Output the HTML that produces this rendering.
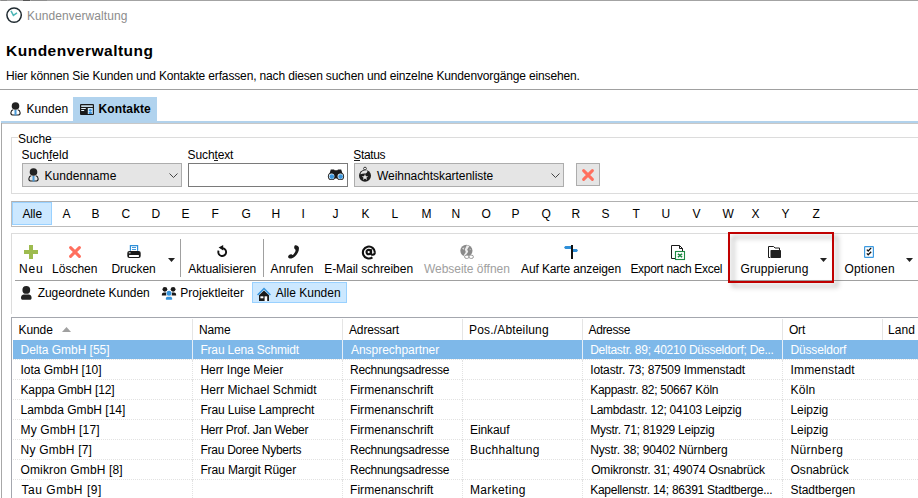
<!DOCTYPE html>
<html><head><meta charset="utf-8">
<style>
*{margin:0;padding:0;box-sizing:border-box}
html,body{width:918px;height:498px;overflow:hidden;background:#fff}
body{position:relative;font-family:"Liberation Sans",sans-serif;font-size:12px;color:#000}
.a{position:absolute}
.t{position:absolute;white-space:nowrap;line-height:15px;height:15px}
.hl{position:absolute;height:1px}
.vl{position:absolute;width:1px}
svg{position:absolute;overflow:visible}
u{text-decoration:underline;text-underline-offset:1px}
</style></head><body>
<div class="hl" style="left:0;top:0;width:918px;background:#a3a3a3"></div>
<div class="hl" style="left:23px;top:0;width:7px;background:#555"></div><div class="hl" style="left:1px;top:0;width:6px;background:#8a8a8a"></div><div class="hl" style="left:31px;top:0;width:16px;background:#8f8f8f"></div>
<svg style="left:6px;top:7px" width="16" height="16" viewBox="0 0 16 16"><circle cx="8.1" cy="8.1" r="7.2" fill="none" stroke="#1f2a30" stroke-width="1.5"/><path d="M5 3.9 L7.4 8.3 L11 5.9" fill="none" stroke="#4bb5b5" stroke-width="1.5"/></svg>
<div class="t" style="left:6px;top:41.5px;font-size:15.5px;font-weight:bold;line-height:18px;height:18px;letter-spacing:0.5px">Kundenverwaltung</div>
<div class="hl" style="left:0;top:89px;width:918px;background:#a0a0a0"></div>
<svg style="left:10px;top:102px" width="11" height="14" viewBox="0 0 11 14"><circle cx="5.5" cy="4" r="3.8" fill="#222"/><path d="M3.2 7.8 C0.5 8.5 0 12.5 2.5 13 L8.5 13 C11 12.5 10.5 8.5 7.8 7.8" fill="none" stroke="#222" stroke-width="1.1"/><rect x="4.5" y="8" width="2" height="5.5" fill="#4a9ad8"/></svg>
<div class="a" style="left:73px;top:97px;width:84px;height:24px;background:#b1d3ee"></div>
<svg style="left:80px;top:104px" width="14" height="11" viewBox="0 0 14 11"><rect x="0" y="0" width="14" height="11" rx="1" fill="#1a1a1a"/><rect x="1.2" y="1.3" width="11.6" height="1.6" fill="#d8eefb"/><rect x="1.2" y="4" width="4.6" height="1" fill="#e6f3fb"/><rect x="1.2" y="6" width="3" height="1" fill="#e6f3fb"/><rect x="7.8" y="4" width="5" height="6" fill="#d2e9f8"/><circle cx="10.3" cy="6.3" r="1.4" fill="#3d94dc"/><rect x="8.8" y="8" width="3" height="2" fill="#3d94dc"/></svg>
<div class="hl" style="left:1px;top:121px;width:917px;height:2px;background:#b2d2ec"></div>
<div class="hl" style="left:1px;top:123px;width:917px;background:#c8c8c8"></div>
<div class="vl" style="left:1px;top:123px;height:375px;background:#a8a8a8"></div>
<div class="a" style="left:11px;top:137px;width:920px;height:57px;border:1px solid #dcdcdc"></div>
<div class="a" style="left:18px;top:132px;width:33px;height:10px;background:#fff"></div>
<div class="a" style="left:22px;top:163px;width:160px;height:24px;border:1px solid #adadad;background:#e5e5e5"></div>
<svg style="left:28px;top:168px" width="11" height="14" viewBox="0 0 11 14"><circle cx="5.5" cy="4" r="3.8" fill="#222"/><path d="M3.2 7.8 C0.5 8.5 0 12.5 2.5 13 L8.5 13 C11 12.5 10.5 8.5 7.8 7.8" fill="none" stroke="#222" stroke-width="1.1"/><rect x="4.5" y="8" width="2" height="5.5" fill="#4a9ad8"/></svg>
<svg style="left:169px;top:173px" width="9" height="5" viewBox="0 0 9 5"><path d="M0.5 0.5 L4.5 4.5 L8.5 0.5" fill="none" stroke="#444" stroke-width="1"/></svg>
<div class="a" style="left:188px;top:163px;width:160px;height:24px;border:1px solid #7a7a7a;background:#fff"></div>
<svg style="left:328px;top:169px" width="16" height="11" viewBox="0 0 16 11"><path d="M1.2 5.5 L2.8 0.6 H6 L6.6 1.2 H9.4 L10 0.6 H13.2 L14.8 5.5 L10 9.5 H6 Z" fill="#1a1a1a"/><circle cx="3.6" cy="7.4" r="3.7" fill="#1a1a1a"/><circle cx="12.4" cy="7.4" r="3.7" fill="#1a1a1a"/><circle cx="3.6" cy="7.4" r="2.8" fill="#e8f4fc"/><circle cx="12.4" cy="7.4" r="2.8" fill="#e8f4fc"/><circle cx="3.8" cy="7.6" r="2.3" fill="#3b96dc"/><circle cx="12.6" cy="7.6" r="2.3" fill="#3b96dc"/></svg>
<div class="a" style="left:354px;top:163px;width:210px;height:24px;border:1px solid #adadad;background:#e5e5e5"></div>
<svg style="left:359px;top:167px" width="12" height="15" viewBox="0 0 12 15"><circle cx="6" cy="1.6" r="1.4" fill="#fff" stroke="#222" stroke-width="0.9"/><circle cx="6" cy="8.8" r="6" fill="#1e1e1e"/><path d="M1.4 7.2 C2 4.4 4.8 3 8.4 3.4 C8.8 5.6 7 6.6 5.6 6.5 C4.2 6.4 2.8 7 1.4 7.2 Z" fill="#e4e4e4"/><path d="M6 7 L6.9 9.2 L9.2 9.3 L7.4 10.7 L8.1 12.9 L6 11.6 L3.9 12.9 L4.6 10.7 L2.8 9.3 L5.1 9.2 Z" fill="#e8e8e8"/></svg>
<svg style="left:551px;top:173px" width="9" height="5" viewBox="0 0 9 5"><path d="M0.5 0.5 L4.5 4.5 L8.5 0.5" fill="none" stroke="#444" stroke-width="1"/></svg>
<div class="a" style="left:576px;top:163px;width:24px;height:23px;border:1px solid #adadad;background:#e5e5e5"></div>
<svg style="left:582px;top:169px" width="12" height="12" viewBox="0 0 12 12"><path d="M1.6 1.6 L10.4 10.4 M10.4 1.6 L1.6 10.4" stroke="#ff6f5e" stroke-width="3" stroke-linecap="round"/></svg>
<div class="hl" style="left:48px;top:160px;width:4px;background:#222"></div><div class="hl" style="left:214px;top:160px;width:4px;background:#222"></div><div class="hl" style="left:354px;top:160px;width:6px;background:#222"></div>
<div class="a" style="left:11px;top:201px;width:920px;height:26px;border:1px solid #bdbdbd;border-top-color:#b0b0b0"></div>
<div class="a" style="left:12px;top:202px;width:40px;height:23px;background:#cce8ff;border:1px solid #99d1ff"></div>
<div class="a" style="left:11px;top:233px;width:920px;height:81px;border:1px solid #dcdcdc;border-bottom:none"></div>
<div class="hl" style="left:15px;top:280px;width:903px;background:#a0a0a0"></div>
<div class="vl" style="left:180px;top:239px;height:38px;background:#a0a0a0"></div>
<div class="vl" style="left:263px;top:239px;height:38px;background:#a0a0a0"></div>
<svg style="left:168px;top:258px" width="7" height="5" viewBox="0 0 7 5"><path d="M0 0 L7 0 L3.5 4 Z" fill="#222"/></svg>
<svg style="left:820px;top:258px" width="7" height="5" viewBox="0 0 7 5"><path d="M0 0 L7 0 L3.5 4 Z" fill="#222"/></svg>
<svg style="left:906px;top:258px" width="7" height="5" viewBox="0 0 7 5"><path d="M0 0 L7 0 L3.5 4 Z" fill="#222"/></svg>
<div class="a" style="left:252px;top:282px;width:95px;height:21px;background:#cce8ff;border:1px solid #99d1ff"></div>
<svg style="left:24px;top:245px" width="14" height="14" viewBox="0 0 14 14"><rect x="5" y="0" width="4" height="14" fill="#9dbb4f"/><rect x="0" y="5" width="14" height="4" fill="#9dbb4f"/></svg>
<svg style="left:69px;top:246px" width="12" height="12" viewBox="0 0 12 12"><path d="M1.6 1.6 L10.4 10.4 M10.4 1.6 L1.6 10.4" stroke="#ff6f5e" stroke-width="3" stroke-linecap="round"/></svg>
<svg style="left:127px;top:245px" width="14" height="14" viewBox="0 0 14 14"><path d="M3.4 5.8 V0.6 H10.6 V5.8" fill="none" stroke="#2f8fd8" stroke-width="1.2"/><path d="M5 2.5 H9 M5 4.5 H9" stroke="#2f8fd8" stroke-width="0.9"/><rect x="0.3" y="6" width="13.4" height="7" rx="2" fill="#1a1a1a"/><rect x="2" y="10" width="10" height="1.9" rx="0.6" fill="#fff"/><rect x="1.8" y="7.4" width="1.8" height="0.9" fill="#fff"/></svg>
<svg style="left:216px;top:244px" width="12" height="14" viewBox="0 0 12 14"><path d="M6.4 4.2 A3.9 3.9 0 1 1 2.6 6.6" fill="none" stroke="#111" stroke-width="1.9"/><path d="M2.6 3.6 L7.2 1 L7.2 6.6 Z" fill="#111"/></svg>
<svg style="left:288px;top:245px" width="11" height="14" viewBox="0 0 11 14"><path d="M7 0.3 C8.6 -0.1 10.6 0.8 10.9 2.6 C11.3 6 9 11 4 13.3 C2.6 14 0.4 13.2 0.1 11.9 C-0.1 11 1.5 9.3 2.9 9.3 C3.9 9.3 4.2 10.3 4.9 9.9 C6.6 8.4 7.8 6.5 7.5 4.8 C7.3 4.2 6.2 4 6.2 3 C6.2 1.8 6.4 0.7 7 0.3 Z" fill="#1a1a1a"/></svg>
<svg style="left:362px;top:245px" width="14" height="14" viewBox="0 0 14 14"><path d="M10.4 12.4 A6 6 0 1 1 12.9 7.4" fill="none" stroke="#111" stroke-width="2.1"/><circle cx="6.7" cy="7.1" r="2.2" fill="none" stroke="#111" stroke-width="2.1"/><path d="M9.1 4.3 V8.6 C9.1 10.4 12.7 10.5 12.9 7.4" fill="none" stroke="#111" stroke-width="2"/></svg>
<svg style="left:460px;top:245px" width="14" height="14" viewBox="0 0 14 14"><circle cx="6.4" cy="5.8" r="6.1" fill="#8a8a8a"/><path d="M6.8 0.2 L9.4 0.9 L7.2 4.6 L8.2 6.8 L5.2 11.2 L3.6 10.6 L5.8 7 L4.8 4.6 Z" fill="#ececec"/><path d="M2 3.4 L4.4 2.2 L3.8 4.8 Z" fill="#dcdcdc"/><path d="M9.6 3.4 L11 4.4 L9.8 5.4 Z" fill="#c8c8c8"/><rect x="4.6" y="10.2" width="4.4" height="3.2" rx="1.6" fill="#fff" stroke="#9a9a9a" stroke-width="1"/><rect x="9" y="10.2" width="4.4" height="3.2" rx="1.6" fill="#fff" stroke="#9a9a9a" stroke-width="1"/></svg>
<svg style="left:564px;top:245px" width="14" height="14" viewBox="0 0 14 14"><rect x="7" y="0" width="2" height="14" fill="#111"/><path d="M7 1 H1.3 L0 2.5 L1.3 4 H7 Z" fill="#2f8fd8"/><path d="M9 4 H12.8 L14 5.5 L12.8 7 H9 Z" fill="#2f8fd8"/></svg>
<svg style="left:671px;top:245px" width="14" height="15" viewBox="0 0 14 15"><path d="M4.5 13.5 H0.5 V0.5 H8.5 L11.5 3.5 V6" fill="none" stroke="#1a1a1a" stroke-width="1"/><path d="M8.5 0.5 V3.5 H11.5" fill="none" stroke="#1a1a1a" stroke-width="1"/><rect x="4.5" y="6.5" width="9" height="8" fill="#fff" stroke="#1e8a44" stroke-width="1.1"/><path d="M6.9 8.8 L11.1 12.2 M11.1 8.8 L6.9 12.2" stroke="#1e8a44" stroke-width="1.5"/></svg>
<svg style="left:768px;top:246px" width="13" height="12" viewBox="0 0 13 12"><path d="M2.2 11.5 H0.5 V0.5 H5.6 L7 2 H11.5 V4" fill="none" stroke="#1a1a1a" stroke-width="1"/><rect x="2.5" y="4" width="10.5" height="8" rx="0.8" fill="#1f1f1f"/></svg>
<svg style="left:864px;top:246px" width="10" height="12" viewBox="0 0 10 12"><rect x="0.6" y="0.6" width="8.8" height="10.8" rx="0.6" fill="#fff" stroke="#3d9ae0" stroke-width="1.2"/><path d="M2.8 3.6 L4.2 5 L7.2 1.9 M2.8 7.4 L4.2 8.8 L7.2 5.7" fill="none" stroke="#111" stroke-width="1.3"/></svg>
<div class="a" style="left:728px;top:232px;width:106px;height:51px;border:2px solid #c00000;filter:drop-shadow(4px 4px 2.5px rgba(0,0,0,0.32))"></div>
<svg style="left:21px;top:286px" width="11" height="14" viewBox="0 0 11 14"><circle cx="5.3" cy="3.9" r="3.9" fill="#222"/><path d="M0 12 C0 9.2 2 8.6 3 8.6 H7.8 C9 8.6 10.6 9.2 10.6 12 C10.6 13.4 9.6 13.8 8.6 13.8 H2 C1 13.8 0 13.4 0 12 Z" fill="#222"/></svg>
<svg style="left:161px;top:286px" width="16" height="15" viewBox="0 0 16 15"><circle cx="3.9" cy="3.3" r="2.4" fill="#1a1a1a"/><circle cx="12.1" cy="3.3" r="2.4" fill="#1a1a1a"/><path d="M0.8 9.6 C0.8 7.2 1.8 6.6 3 6.6 H5.4 V9.6 Z M15.2 9.6 C15.2 7.2 14.2 6.6 13 6.6 H10.6 V9.6 Z" fill="#1a1a1a"/><circle cx="8" cy="7.3" r="2.9" fill="#fff"/><circle cx="8" cy="7.3" r="2.5" fill="#3493dc"/><path d="M4.8 13 C4.8 11.3 5.6 10.8 6.8 10.8 H9.2 C10.4 10.8 11.2 11.3 11.2 13 C11.2 13.6 10.8 13.8 10.2 13.8 H5.8 C5.2 13.8 4.8 13.6 4.8 13 Z" fill="#3493dc"/></svg>
<svg style="left:257px;top:288px" width="15" height="14" viewBox="0 0 15 14"><path d="M0.6 6.9 L7 0.6 L13.4 6.9" fill="none" stroke="#3493dc" stroke-width="1.4"/><path d="M2 7.2 L7 2.6 L12 7.2 V13 H2 Z" fill="#1a1a1a"/><rect x="3.4" y="8.3" width="3" height="2" fill="#fff"/><rect x="7.6" y="8.3" width="2.6" height="4.8" fill="#fff"/></svg>
<div class="a" style="left:11px;top:317px;width:920px;height:200px;border:1px solid #a4a7ae"></div>
<div class="vl" style="left:192px;top:319px;height:21px;background:#e5e5e5"></div>
<div class="vl" style="left:342px;top:319px;height:21px;background:#e5e5e5"></div>
<div class="vl" style="left:462px;top:319px;height:21px;background:#e5e5e5"></div>
<div class="vl" style="left:582px;top:319px;height:21px;background:#e5e5e5"></div>
<div class="vl" style="left:782px;top:319px;height:21px;background:#e5e5e5"></div>
<div class="vl" style="left:882px;top:319px;height:21px;background:#e5e5e5"></div>
<svg style="left:62px;top:327px" width="9" height="5" viewBox="0 0 9 5"><path d="M0 5 L4.5 0 L9 5 Z" fill="#a0a0a0"/></svg>
<div class="a" style="left:13px;top:340px;width:905px;height:19px;background:#7eb8e9"></div>
<div class="hl" style="left:13px;top:359px;width:905px;border-top:1px dotted #e2e2e2"></div>
<div class="vl" style="left:192px;top:340px;height:20px;background:#e6eef7"></div>
<div class="vl" style="left:342px;top:340px;height:20px;background:#e6eef7"></div>
<div class="vl" style="left:582px;top:340px;height:20px;background:#e6eef7"></div>
<div class="vl" style="left:782px;top:340px;height:20px;background:#e6eef7"></div>
<div class="hl" style="left:13px;top:379px;width:905px;border-top:1px dotted #e2e2e2"></div>
<div class="vl" style="left:192px;top:360px;height:20px;border-left:1px dotted #e2e2e2"></div>
<div class="vl" style="left:342px;top:360px;height:20px;border-left:1px dotted #e2e2e2"></div>
<div class="vl" style="left:462px;top:360px;height:20px;border-left:1px dotted #e2e2e2"></div>
<div class="vl" style="left:582px;top:360px;height:20px;border-left:1px dotted #e2e2e2"></div>
<div class="vl" style="left:782px;top:360px;height:20px;border-left:1px dotted #e2e2e2"></div>
<div class="hl" style="left:13px;top:399px;width:905px;border-top:1px dotted #e2e2e2"></div>
<div class="vl" style="left:192px;top:380px;height:20px;border-left:1px dotted #e2e2e2"></div>
<div class="vl" style="left:342px;top:380px;height:20px;border-left:1px dotted #e2e2e2"></div>
<div class="vl" style="left:462px;top:380px;height:20px;border-left:1px dotted #e2e2e2"></div>
<div class="vl" style="left:582px;top:380px;height:20px;border-left:1px dotted #e2e2e2"></div>
<div class="vl" style="left:782px;top:380px;height:20px;border-left:1px dotted #e2e2e2"></div>
<div class="hl" style="left:13px;top:419px;width:905px;border-top:1px dotted #e2e2e2"></div>
<div class="vl" style="left:192px;top:400px;height:20px;border-left:1px dotted #e2e2e2"></div>
<div class="vl" style="left:342px;top:400px;height:20px;border-left:1px dotted #e2e2e2"></div>
<div class="vl" style="left:462px;top:400px;height:20px;border-left:1px dotted #e2e2e2"></div>
<div class="vl" style="left:582px;top:400px;height:20px;border-left:1px dotted #e2e2e2"></div>
<div class="vl" style="left:782px;top:400px;height:20px;border-left:1px dotted #e2e2e2"></div>
<div class="hl" style="left:13px;top:439px;width:905px;border-top:1px dotted #e2e2e2"></div>
<div class="vl" style="left:192px;top:420px;height:20px;border-left:1px dotted #e2e2e2"></div>
<div class="vl" style="left:342px;top:420px;height:20px;border-left:1px dotted #e2e2e2"></div>
<div class="vl" style="left:462px;top:420px;height:20px;border-left:1px dotted #e2e2e2"></div>
<div class="vl" style="left:582px;top:420px;height:20px;border-left:1px dotted #e2e2e2"></div>
<div class="vl" style="left:782px;top:420px;height:20px;border-left:1px dotted #e2e2e2"></div>
<div class="hl" style="left:13px;top:459px;width:905px;border-top:1px dotted #e2e2e2"></div>
<div class="vl" style="left:192px;top:440px;height:20px;border-left:1px dotted #e2e2e2"></div>
<div class="vl" style="left:342px;top:440px;height:20px;border-left:1px dotted #e2e2e2"></div>
<div class="vl" style="left:462px;top:440px;height:20px;border-left:1px dotted #e2e2e2"></div>
<div class="vl" style="left:582px;top:440px;height:20px;border-left:1px dotted #e2e2e2"></div>
<div class="vl" style="left:782px;top:440px;height:20px;border-left:1px dotted #e2e2e2"></div>
<div class="hl" style="left:13px;top:479px;width:905px;border-top:1px dotted #e2e2e2"></div>
<div class="vl" style="left:192px;top:460px;height:20px;border-left:1px dotted #e2e2e2"></div>
<div class="vl" style="left:342px;top:460px;height:20px;border-left:1px dotted #e2e2e2"></div>
<div class="vl" style="left:462px;top:460px;height:20px;border-left:1px dotted #e2e2e2"></div>
<div class="vl" style="left:582px;top:460px;height:20px;border-left:1px dotted #e2e2e2"></div>
<div class="vl" style="left:782px;top:460px;height:20px;border-left:1px dotted #e2e2e2"></div>
<div class="hl" style="left:13px;top:499px;width:905px;border-top:1px dotted #e2e2e2"></div>
<div class="vl" style="left:192px;top:480px;height:20px;border-left:1px dotted #e2e2e2"></div>
<div class="vl" style="left:342px;top:480px;height:20px;border-left:1px dotted #e2e2e2"></div>
<div class="vl" style="left:462px;top:480px;height:20px;border-left:1px dotted #e2e2e2"></div>
<div class="vl" style="left:582px;top:480px;height:20px;border-left:1px dotted #e2e2e2"></div>
<div class="vl" style="left:782px;top:480px;height:20px;border-left:1px dotted #e2e2e2"></div>
<div class="t" style="left:27.00px;top:9.0px;letter-spacing:0.061px;color:#8c8c8c">Kundenverwaltung</div>
<div class="t" style="left:6.00px;top:69.0px;letter-spacing:-0.144px;">Hier können Sie Kunden und Kontakte erfassen, nach diesen suchen und einzelne Kundenvorgänge einsehen.</div>
<div class="t" style="left:26.40px;top:102.0px;letter-spacing:0.090px;">Kunden</div>
<div class="t" style="left:98.50px;top:102.0px;letter-spacing:0.136px;font-weight:bold">Kontakte</div>
<div class="t" style="left:18.00px;top:131.6px;letter-spacing:-0.100px;">Suche</div>
<div class="t" style="left:21.60px;top:148.0px;letter-spacing:0.018px;">Suchfeld</div>
<div class="t" style="left:187.60px;top:148.0px;letter-spacing:-0.119px;">Suchtext</div>
<div class="t" style="left:353.30px;top:148.0px;letter-spacing:-0.350px;">Status</div>
<div class="t" style="left:44.50px;top:169.0px;letter-spacing:0.046px;">Kundenname</div>
<div class="t" style="left:377.00px;top:169.0px;letter-spacing:-0.050px;">Weihnachtskartenliste</div>
<div class="t" style="left:19.10px;top:262.0px;letter-spacing:0.750px;">Neu</div>
<div class="t" style="left:52.00px;top:262.0px;letter-spacing:0.016px;">Löschen</div>
<div class="t" style="left:111.50px;top:262.0px;letter-spacing:-0.083px;">Drucken</div>
<div class="t" style="left:188.20px;top:262.0px;letter-spacing:-0.050px;">Aktualisieren</div>
<div class="t" style="left:270.60px;top:262.0px;letter-spacing:0.119px;">Anrufen</div>
<div class="t" style="left:324.20px;top:262.0px;letter-spacing:-0.032px;">E-Mail schreiben</div>
<div class="t" style="left:423.90px;top:262.0px;letter-spacing:-0.023px;color:#a0a0a0">Webseite öffnen</div>
<div class="t" style="left:521.00px;top:262.0px;letter-spacing:-0.117px;">Auf Karte anzeigen</div>
<div class="t" style="left:630.40px;top:262.0px;letter-spacing:-0.286px;">Export nach Excel</div>
<div class="t" style="left:740.50px;top:262.0px;letter-spacing:0.110px;">Gruppierung</div>
<div class="t" style="left:844.40px;top:262.0px;letter-spacing:0.219px;">Optionen</div>
<div class="t" style="left:37.70px;top:286.0px;letter-spacing:-0.040px;">Zugeordnete Kunden</div>
<div class="t" style="left:180.20px;top:286.0px;letter-spacing:0.032px;">Projektleiter</div>
<div class="t" style="left:275.80px;top:286.0px;letter-spacing:0.010px;">Alle Kunden</div>
<div class="t" style="left:18.50px;top:323.0px;letter-spacing:-0.100px;">Kunde</div>
<div class="t" style="left:199.00px;top:323.0px;letter-spacing:-0.150px;">Name</div>
<div class="t" style="left:349.00px;top:323.0px;letter-spacing:-0.150px;">Adressart</div>
<div class="t" style="left:469.00px;top:323.0px;letter-spacing:0.171px;">Pos./Abteilung</div>
<div class="t" style="left:588.60px;top:323.0px;letter-spacing:-0.381px;">Adresse</div>
<div class="t" style="left:788.90px;top:323.0px;letter-spacing:-0.150px;">Ort</div>
<div class="t" style="left:888.00px;top:323.0px;letter-spacing:0.115px;">Land</div>
<div class="t" style="left:20.50px;top:343.0px;letter-spacing:-0.021px;color:#fff">Delta GmbH [55]</div>
<div class="t" style="left:200.40px;top:343.0px;letter-spacing:-0.171px;color:#fff">Frau Lena Schmidt</div>
<div class="t" style="left:351.00px;top:343.0px;letter-spacing:-0.033px;color:#fff">Ansprechpartner</div>
<div class="t" style="left:590.20px;top:343.0px;letter-spacing:-0.269px;color:#fff">Deltastr. 89; 40210 Düsseldorf; De...</div>
<div class="t" style="left:790.50px;top:343.0px;letter-spacing:-0.171px;color:#fff">Düsseldorf</div>
<div class="t" style="left:20.50px;top:363.0px;letter-spacing:-0.023px;">Iota GmbH [10]</div>
<div class="t" style="left:200.40px;top:363.0px;letter-spacing:-0.039px;">Herr Inge Meier</div>
<div class="t" style="left:350.00px;top:363.0px;letter-spacing:-0.272px;">Rechnungsadresse</div>
<div class="t" style="left:590.20px;top:363.0px;letter-spacing:-0.138px;">Iotastr. 73; 87509 Immenstadt</div>
<div class="t" style="left:790.50px;top:363.0px;letter-spacing:0.162px;">Immenstadt</div>
<div class="t" style="left:20.50px;top:383.0px;letter-spacing:-0.138px;">Kappa GmbH [12]</div>
<div class="t" style="left:200.40px;top:383.0px;letter-spacing:0.085px;">Herr Michael Schmidt</div>
<div class="t" style="left:350.00px;top:383.0px;letter-spacing:0.052px;">Firmenanschrift</div>
<div class="t" style="left:590.20px;top:383.0px;letter-spacing:-0.282px;">Kappastr. 82; 50667 Köln</div>
<div class="t" style="left:790.50px;top:383.0px;letter-spacing:0.249px;">Köln</div>
<div class="t" style="left:20.50px;top:403.0px;letter-spacing:0.011px;">Lambda GmbH [14]</div>
<div class="t" style="left:200.40px;top:403.0px;letter-spacing:-0.150px;">Frau Luise Lamprecht</div>
<div class="t" style="left:350.00px;top:403.0px;letter-spacing:0.052px;">Firmenanschrift</div>
<div class="t" style="left:590.20px;top:403.0px;letter-spacing:-0.219px;">Lambdastr. 12; 04103 Leipzig</div>
<div class="t" style="left:790.50px;top:403.0px;letter-spacing:-0.050px;">Leipzig</div>
<div class="t" style="left:20.50px;top:423.0px;letter-spacing:0.157px;">My GmbH [17]</div>
<div class="t" style="left:200.40px;top:423.0px;letter-spacing:-0.266px;">Herr Prof. Jan Weber</div>
<div class="t" style="left:350.00px;top:423.0px;letter-spacing:0.052px;">Firmenanschrift</div>
<div class="t" style="left:470.00px;top:423.0px;letter-spacing:-0.082px;">Einkauf</div>
<div class="t" style="left:590.20px;top:423.0px;letter-spacing:-0.244px;">Mystr. 71; 81929 Leipzig</div>
<div class="t" style="left:790.50px;top:423.0px;letter-spacing:-0.050px;">Leipzig</div>
<div class="t" style="left:20.50px;top:443.0px;letter-spacing:0.210px;">Ny GmbH [7]</div>
<div class="t" style="left:200.40px;top:443.0px;letter-spacing:-0.246px;">Frau Doree Nyberts</div>
<div class="t" style="left:350.00px;top:443.0px;letter-spacing:-0.272px;">Rechnungsadresse</div>
<div class="t" style="left:470.00px;top:443.0px;letter-spacing:0.270px;">Buchhaltung</div>
<div class="t" style="left:590.20px;top:443.0px;letter-spacing:-0.141px;">Nystr. 38; 90402 Nürnberg</div>
<div class="t" style="left:790.50px;top:443.0px;letter-spacing:0.338px;">Nürnberg</div>
<div class="t" style="left:20.50px;top:463.0px;letter-spacing:0.145px;">Omikron GmbH [8]</div>
<div class="t" style="left:200.40px;top:463.0px;letter-spacing:-0.099px;">Frau Margit Rüger</div>
<div class="t" style="left:350.00px;top:463.0px;letter-spacing:-0.272px;">Rechnungsadresse</div>
<div class="t" style="left:591.20px;top:463.0px;letter-spacing:-0.184px;">Omikronstr. 31; 49074 Osnabrück</div>
<div class="t" style="left:790.50px;top:463.0px;letter-spacing:0.031px;">Osnabrück</div>
<div class="t" style="left:21.50px;top:483.0px;letter-spacing:0.526px;">Tau GmbH [9]</div>
<div class="t" style="left:350.00px;top:483.0px;letter-spacing:0.052px;">Firmenanschrift</div>
<div class="t" style="left:470.00px;top:483.0px;letter-spacing:0.344px;">Marketing</div>
<div class="t" style="left:590.20px;top:483.0px;letter-spacing:-0.256px;">Kapellenstr. 14; 86391 Stadtberge...</div>
<div class="t" style="left:790.50px;top:483.0px;letter-spacing:-0.070px;">Stadtbergen</div>
<div class="t" style="left:22.50px;top:207.0px;letter-spacing:-0.150px;">Alle</div>
<div class="t" style="left:62.50px;top:207.0px;letter-spacing:-0.150px;">A</div>
<div class="t" style="left:91.50px;top:207.0px;letter-spacing:-0.150px;">B</div>
<div class="t" style="left:121.50px;top:207.0px;letter-spacing:-0.150px;">C</div>
<div class="t" style="left:151.50px;top:207.0px;letter-spacing:-0.150px;">D</div>
<div class="t" style="left:181.50px;top:207.0px;letter-spacing:-0.150px;">E</div>
<div class="t" style="left:211.50px;top:207.0px;letter-spacing:-0.150px;">F</div>
<div class="t" style="left:241.50px;top:207.0px;letter-spacing:-0.150px;">G</div>
<div class="t" style="left:271.50px;top:207.0px;letter-spacing:-0.150px;">H</div>
<div class="t" style="left:301.50px;top:207.0px;letter-spacing:-0.150px;">I</div>
<div class="t" style="left:332.50px;top:207.0px;letter-spacing:-0.150px;">J</div>
<div class="t" style="left:361.50px;top:207.0px;letter-spacing:-0.150px;">K</div>
<div class="t" style="left:391.50px;top:207.0px;letter-spacing:-0.150px;">L</div>
<div class="t" style="left:421.50px;top:207.0px;letter-spacing:-0.150px;">M</div>
<div class="t" style="left:451.50px;top:207.0px;letter-spacing:-0.150px;">N</div>
<div class="t" style="left:481.50px;top:207.0px;letter-spacing:-0.150px;">O</div>
<div class="t" style="left:511.50px;top:207.0px;letter-spacing:-0.150px;">P</div>
<div class="t" style="left:541.50px;top:207.0px;letter-spacing:-0.150px;">Q</div>
<div class="t" style="left:571.50px;top:207.0px;letter-spacing:-0.150px;">R</div>
<div class="t" style="left:601.50px;top:207.0px;letter-spacing:-0.150px;">S</div>
<div class="t" style="left:632.50px;top:207.0px;letter-spacing:-0.150px;">T</div>
<div class="t" style="left:661.50px;top:207.0px;letter-spacing:-0.150px;">U</div>
<div class="t" style="left:692.50px;top:207.0px;letter-spacing:-0.150px;">V</div>
<div class="t" style="left:722.50px;top:207.0px;letter-spacing:-0.150px;">W</div>
<div class="t" style="left:751.50px;top:207.0px;letter-spacing:-0.150px;">X</div>
<div class="t" style="left:781.50px;top:207.0px;letter-spacing:-0.150px;">Y</div>
<div class="t" style="left:812.50px;top:207.0px;letter-spacing:-0.150px;">Z</div>
</body></html>
